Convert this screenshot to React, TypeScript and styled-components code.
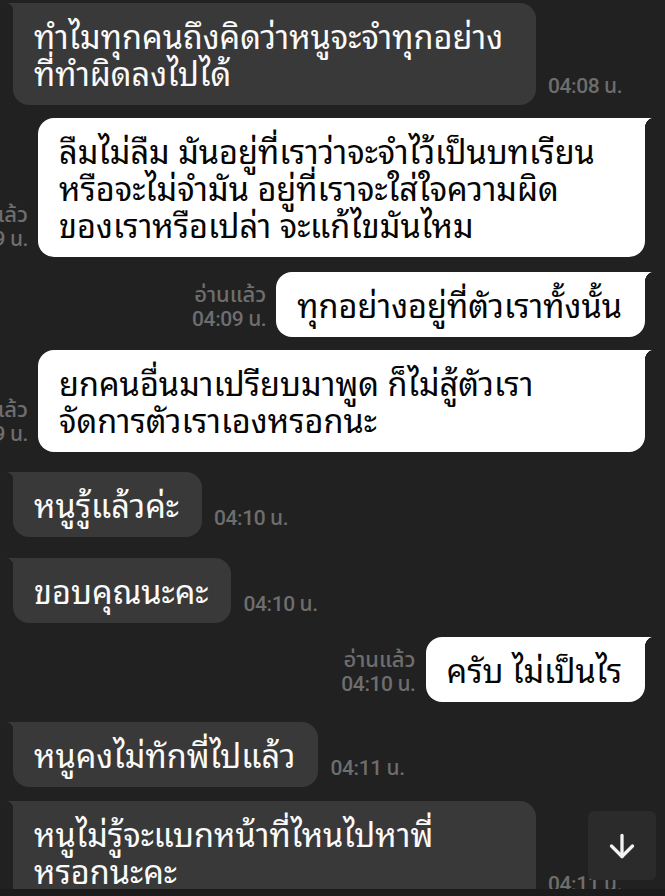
import React from "react";
import styled, { createGlobalStyle } from "styled-components";
import { ArrowDown } from "lucide-react";

const GlobalStyle = createGlobalStyle`
  html, body {
    margin: 0;
    padding: 0;
    background: #212121;
    height: 896px;
    overflow: hidden;
  }
  * { box-sizing: border-box; }
`;

const THAI = `"Noto Sans Thai Looped", "Noto Sans Thai", "Loma", "Garuda", "Noto Sans", sans-serif`;
const META = `Roboto, "Noto Sans Thai", "Noto Sans", sans-serif`;

const Screen = styled.div`
  position: relative;
  width: 665px;
  height: 896px;
  overflow: hidden;
  background: #212121;
`;

const Thread = styled.div`
  display: flex;
  flex-direction: column;
  padding: 3px 20px 0 13px;
`;

const Row = styled.div<{ $mine: boolean; $gap: number }>`
  display: flex;
  align-items: flex-end;
  justify-content: ${(p) => (p.$mine ? "flex-end" : "flex-start")};
  gap: ${(p) => (p.$mine ? "10px" : "12px")};
  margin-top: ${(p) => p.$gap}px;
`;

const Bubble = styled.div<{ $mine: boolean; $width?: number }>`
  position: relative;
  flex-shrink: 0;
  width: ${(p) => (p.$width ? `${p.$width}px` : "auto")};
  padding: 13px 23px 15px 21px;
  font-family: ${THAI};
  font-size: 32.5px;
  line-height: 37px;
  white-space: nowrap;
  color: ${(p) => (p.$mine ? "#050505" : "#fafafa")};
  background: ${(p) => (p.$mine ? "#ffffff" : "#393939")};
  border-radius: ${(p) => (p.$mine ? "16px 0 16px 16px" : "0 16px 16px 16px")};

  &::before {
    content: "";
    position: absolute;
    top: 0;
    width: 8px;
    height: 14px;
    ${(p) =>
      p.$mine
        ? `right: -7px;
           background: radial-gradient(ellipse 8px 14px at 100% 100%, transparent 96%, #ffffff 100%);`
        : `left: -6px;
           background: radial-gradient(ellipse 8px 14px at 0 100%, transparent 96%, #393939 100%);`}
  }
`;

const Time = styled.div`
  flex-shrink: 0;
  margin-bottom: 7px;
  font-family: ${META};
  font-size: 21px;
  font-weight: 500;
  line-height: 24px;
  color: #6e6e6e;
  letter-spacing: -0.4px;
  white-space: nowrap;
`;

const ReadMeta = styled(Time)`
  text-align: right;
  margin-bottom: 6px;
`;

const ReadLabel = styled.span`
  font-size: 22px;
  letter-spacing: 0;
`;

const ScrollButton = styled.div`
  position: absolute;
  left: 588px;
  top: 811px;
  width: 68px;
  height: 69px;
  border-radius: 6px;
  background: #2b2b2b;
  display: flex;
  align-items: center;
  justify-content: center;
  color: #f2f2f2;
`;

const BottomEdge = styled.div`
  position: absolute;
  left: 0;
  right: 0;
  bottom: 0;
  height: 7px;
  background: #1b1b1b;
`;

type Msg = {
  mine: boolean;
  lines: string[];
  time: string;
  gap: number;
  width?: number;
};

const messages: Msg[] = [
  {
    mine: false,
    lines: ["ทำไมทุกคนถึงคิดว่าหนูจะจำทุกอย่าง", "ที่ทำผิดลงไปได้"],
    time: "04:08 น.",
    gap: 0,
    width: 523,
  },
  {
    mine: true,
    lines: [
      "ลืมไม่ลืม มันอยู่ที่เราว่าจะจำไว้เป็นบทเรียน",
      "หรือจะไม่จำมัน อยู่ที่เราจะใส่ใจความผิด",
      "ของเราหรือเปล่า จะแก้ไขมันไหม",
    ],
    time: "04:09 น.",
    gap: 13,
    width: 607,
  },
  {
    mine: true,
    lines: ["ทุกอย่างอยู่ที่ตัวเราทั้งนั้น"],
    time: "04:09 น.",
    gap: 15,
  },
  {
    mine: true,
    lines: ["ยกคนอื่นมาเปรียบมาพูด ก็ไม่สู้ตัวเรา", "จัดการตัวเราเองหรอกนะ"],
    time: "04:09 น.",
    gap: 13,
    width: 607,
  },
  { mine: false, lines: ["หนูรู้แล้วค่ะ"], time: "04:10 น.", gap: 20 },
  { mine: false, lines: ["ขอบคุณนะคะ"], time: "04:10 น.", gap: 21 },
  { mine: true, lines: ["ครับ ไม่เป็นไร"], time: "04:10 น.", gap: 14 },
  { mine: false, lines: ["หนูคงไม่ทักพี่ไปแล้ว"], time: "04:11 น.", gap: 20 },
  {
    mine: false,
    lines: ["หนูไม่รู้จะแบกหน้าที่ไหนไปหาพี่", "หรอกนะคะ"],
    time: "04:11 น.",
    gap: 14,
    width: 523,
  },
];

const MessageRow = ({ msg }: { msg: Msg }) => {
  const bubble = (
    <Bubble $mine={msg.mine} $width={msg.width}>
      {msg.lines.map((line, i) => (
        <div key={i}>{line}</div>
      ))}
    </Bubble>
  );

  if (msg.mine) {
    return (
      <Row $mine $gap={msg.gap}>
        <ReadMeta>
          <ReadLabel>อ่านแล้ว</ReadLabel>
          <br />
          {msg.time}
        </ReadMeta>
        {bubble}
      </Row>
    );
  }

  return (
    <Row $mine={false} $gap={msg.gap}>
      {bubble}
      <Time>{msg.time}</Time>
    </Row>
  );
};

export default function App() {
  return (
    <>
      <GlobalStyle />
      <Screen>
        <Thread>
          {messages.map((m, i) => (
            <MessageRow key={i} msg={m} />
          ))}
        </Thread>
        <ScrollButton>
          <ArrowDown size={36} strokeWidth={2.2} />
        </ScrollButton>
        <BottomEdge />
      </Screen>
    </>
  );
}
